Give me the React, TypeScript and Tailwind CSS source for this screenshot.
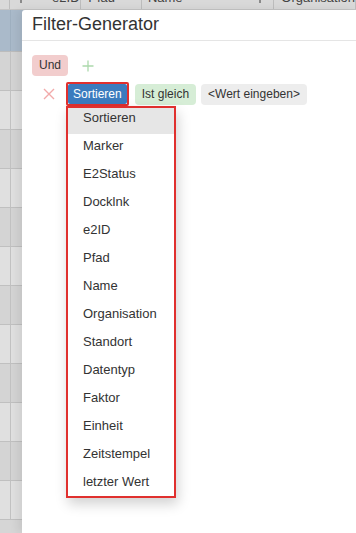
import React from "react";

const fields = [
  "Sortieren",
  "Marker",
  "E2Status",
  "Docklnk",
  "e2ID",
  "Pfad",
  "Name",
  "Organisation",
  "Standort",
  "Datentyp",
  "Faktor",
  "Einheit",
  "Zeitstempel",
  "letzter Wert",
];

// columns of the table behind the dialog (only its top edge shows)
const columns = [
  { w: "w-[11px]", pad: "pl-0", label: "", handle: "" },
  { w: "w-[74px]", pad: "pl-[42px]", label: "e2ID", handle: "left-[10px]" },
  { w: "w-[66px]", pad: "pl-[7px]", label: "Pfad", handle: "" },
  { w: "w-[145px]", pad: "pl-[6px]", label: "Name", handle: "right-[12px]" },
  { w: "flex-1", pad: "pl-[7px]", label: "Organisation", handle: "" },
];

const BackgroundTable = () => (
  <div className="flex flex-col w-full h-full bg-[#d6d6d6]">
    <div className="flex h-[10px] bg-[#d9d9d9] border-b border-[#c4c4c4] overflow-hidden">
      {columns.map((c, i) => (
        <div
          key={i}
          className={`${c.w} ${c.pad} relative border-r border-[#bdbdbd] text-[13px] leading-[13px] text-[#444] -mt-[9px]`}
        >
          {c.label}
          {c.handle && (
            <span
              className={`absolute ${c.handle} top-[9px] w-[2px] h-[3px] bg-[#8a8a8a]`}
            />
          )}
        </div>
      ))}
    </div>
    <div className="h-[42px] bg-[#aabaca] border-b border-[#bcbcbc] flex">
      <div className="w-[11px] border-r border-[#9fb0c0]" />
    </div>
    {Array.from({ length: 12 }).map((_, i) => (
      <div
        key={i}
        className={`h-[39px] flex border-b border-[#c0c0c0] ${
          i % 2 === 0 ? "bg-[#d4d4d4]" : "bg-[#e0e0e0]"
        }`}
      >
        <div className="w-[11px] border-r border-[#c2c2c2]" />
      </div>
    ))}
  </div>
);

const CrossIcon = () => (
  <svg width="12" height="12" viewBox="0 0 12 12">
    <path d="M1 1 L11 11 M11 1 L1 11" stroke="#f2aaaa" strokeWidth="1.4" />
  </svg>
);

const PlusIcon = () => (
  <svg width="12" height="12" viewBox="0 0 12 12">
    <path d="M6 0.5 V11.5 M0.5 6 H11.5" stroke="#acd9ac" strokeWidth="1.3" />
  </svg>
);

const FieldDropdown = () => (
  <div className="absolute left-0 top-full w-[110px] bg-white border-2 border-[#e0302e] shadow-[2px_6px_12px_rgba(0,0,0,0.18)] z-10">
    <ul className="h-[388px] overflow-hidden">
      {fields.map((f, i) => (
        <li
          key={f}
          className={`h-[26px] mb-[2px] pl-[15px] text-[13px] leading-[20px] text-[#333] ${
            i === 0 ? "bg-[#e6e6e6]" : ""
          }`}
        >
          {f}
        </li>
      ))}
    </ul>
  </div>
);

export default function App() {
  return (
    <div
      className="relative w-[356px] h-[533px] overflow-hidden"
      style={{ fontFamily: '"Liberation Sans", Arial, sans-serif' }}
    >
      <BackgroundTable />
      <div className="absolute left-[22px] top-[10px] right-0 bottom-0 bg-white rounded-tl-[3px] shadow-[-4px_0_10px_rgba(0,0,0,0.08)]">
        <div className="h-[31px] border-b border-[#e5e5e5] pl-[10px]">
          <h2 className="text-[18px] leading-[24px] pt-[2px] text-[#333]">
            Filter-Generator
          </h2>
        </div>
        <div className="px-[10px] pt-[14px] flex flex-col gap-[6px]">
          <div className="flex items-center gap-[14px]">
            <span className="h-[21px] px-[7px] rounded-[4px] bg-[#f2cdcd] text-[12px] leading-[21px] text-[#333]">
              Und
            </span>
            <PlusIcon />
          </div>
          <div className="flex items-center">
            <span className="w-[34px] flex justify-center">
              <CrossIcon />
            </span>
            <div className="relative flex">
              <div className="flex border-2 border-[#e0302e] rounded-[2px]">
                <button className="h-[20px] px-[5px] rounded-[2px] bg-[#3b7bbe] text-white text-[12px] leading-[20px]">
                  Sortieren
                </button>
              </div>
              <FieldDropdown />
            </div>
            <span className="ml-[6px] h-[21px] px-[7px] rounded-[4px] bg-[#d6edd6] text-[12px] leading-[21px] text-[#333]">
              Ist gleich
            </span>
            <span className="ml-[5px] h-[21px] px-[7px] rounded-[4px] bg-[#ededed] text-[12px] leading-[21px] text-[#333]">
              &lt;Wert eingeben&gt;
            </span>
          </div>
        </div>
      </div>
    </div>
  );
}
